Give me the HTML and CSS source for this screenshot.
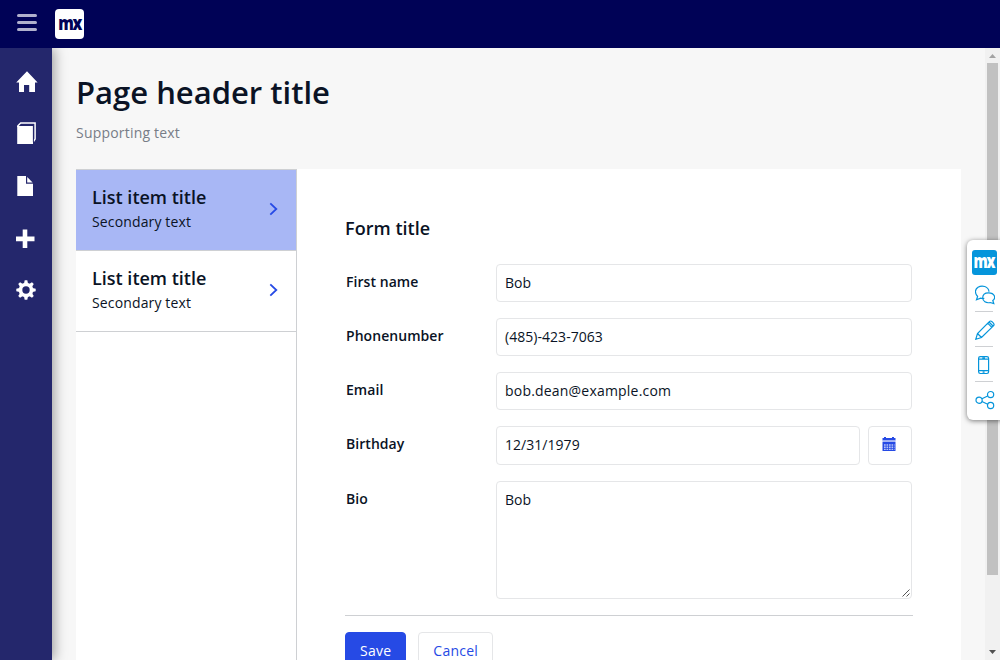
FILE: index.html
```html
<!DOCTYPE html>
<html lang="en">
<head>
<meta charset="utf-8">
<title>Page header title</title>
<link rel="stylesheet" href="styles.css">
</head>
<body>
<div class="app">
  <header class="topbar">
    <div class="menu-toggle"><span></span><span></span><span></span></div>
    <div class="logo"><span>mx</span></div>
  </header>
  <div class="body">
    <nav class="sidebar">
      <a class="nav-item"><svg viewBox="0 0 52 52"><path fill="#fff" d="M27 15.2 37.6 26.4H35V36H29.2V29H24V36H19V26.4H16.2Z"/></svg></a>
      <a class="nav-item"><svg viewBox="0 0 52 52"><path fill="#fff" d="M17.2 18H33V36H17.2Z"/><path fill="none" stroke="#fff" stroke-width="1.5" d="M17.9 19V17.8L20.7 14.9H35.1V31L33.4 33.5"/><path fill="none" stroke="#24276c" stroke-width="1" d="M20 17.3H33.4V34"/></svg></a>
      <a class="nav-item"><svg viewBox="0 0 52 52"><path fill="#fff" d="M17.3 16H26V23.8H33V36H17.3Z"/><path fill="#fff" d="M27.2 17 32.6 22.4H27.2Z"/></svg></a>
      <a class="nav-item"><svg viewBox="0 0 52 52"><path fill="#fff" d="M22.7 17.5H27.3V24.5H34.5V29.2H27.3V36H22.7V29.2H16V24.5H22.7Z"/></svg></a>
      <a class="nav-item"><svg viewBox="0 0 52 52"><g fill="#fff" transform="translate(26 26)"><circle r="7.3"/><path id="tooth" d="M-2-6.5-1.3-9.7H1.3L2-6.5V6.5L1.3 9.7H-1.3L-2 6.5Z"/><use href="#tooth" transform="rotate(45)"/><use href="#tooth" transform="rotate(90)"/><use href="#tooth" transform="rotate(135)"/><circle r="3.7" fill="#24276c"/></g></svg></a>
    </nav>
    <main class="page">
      <h1>Page header title</h1>
      <p class="support">Supporting text</p>
      <div class="panel">
        <div class="list">
          <div class="item selected">
            <div><h3>List item title</h3><p>Secondary text</p></div>
            <svg class="chevron" viewBox="0 0 10 14"><path d="M1.3 1.3 7.3 7 1.3 12.7"/></svg>
          </div>
          <div class="item">
            <div><h3>List item title</h3><p>Secondary text</p></div>
            <svg class="chevron" viewBox="0 0 10 14"><path d="M1.3 1.3 7.3 7 1.3 12.7"/></svg>
          </div>
        </div>
        <form class="form">
          <h2>Form title</h2>
          <div class="row"><label>First name</label><div class="input">Bob</div></div>
          <div class="row"><label>Phonenumber</label><div class="input">(485)-423-7063</div></div>
          <div class="row"><label>Email</label><div class="input email">bob.dean@example.com</div></div>
          <div class="row"><label>Birthday</label><div class="input date">12/31/1979</div>
            <div class="calendar"><svg viewBox="0 0 14 14"><path fill="#264ae5" d="M2 0H4V1H10V0H12V1H13.5V3.4H.5V1H2Z"/><path fill="#a8b7f5" d="M.5 3.4H13.5V5H.5Z"/><path fill="#264ae5" d="M.5 5H13.5V14H.5Z"/><path stroke="#b9c5f8" stroke-width="1.4" stroke-dasharray="1.7 .8" d="M2 8H12.5M2 10.2H12.5M2 12.4H12.5"/></svg></div>
          </div>
          <div class="row"><label>Bio</label><div class="input area">Bob<svg class="grip" viewBox="0 0 8 8"><path d="M.5 7.5 7.5.5M4.5 7.5 7.5 4.5"/></svg></div></div>
          <div class="actions"><a class="button primary">Save</a><a class="button">Cancel</a></div>
        </form>
      </div>
    </main>
    <div class="scrollbar">
      <svg viewBox="0 0 15 15"><path fill="#a3a3a3" d="M4 10H11L7.5 6Z"/></svg>
      <div class="thumb"></div>
      <svg class="down" viewBox="0 0 15 15"><path fill="#505050" d="M4 5H11L7.5 9Z"/></svg>
    </div>
  </div>
  <aside class="dock">
    <div class="dock-logo"><span>mx</span></div>
    <div class="tool"><svg viewBox="0 0 20 20"><path d="M9.3 13.3Q7.5 13.7 5.6 13.2L1.5 14.8 2.6 11.5C-.5 8-.2 4.5 3 2.3C7-.2 13.5 1.3 14 6.8"/><path d="M17.8 15.5 18.8 18.6 15.2 17.5C11 18.5 7.7 16.3 7.7 12.8C7.7 9.5 10.3 7.8 13.5 7.8C20 7.8 21 13.3 17.8 15.5Z"/></svg></div>
    <div class="tool"><svg viewBox="0 0 20 20"><path d="M.8 19.2 2.5 13.5 14.3 1.7Q15.5.3 17 1.7L18.4 3.1Q19.7 4.5 18.4 5.8L6.5 17.5ZM2.5 13.5 6.5 17.5M12.7 3.2 16.8 7.3M14 2 18 6"/></svg></div>
    <div class="tool"><svg viewBox="0 0 20 20"><rect x="3.6" y="1.6" width="10" height="16.9" rx="1.7"/><path d="M3.6 4.2H13.6M3.6 15.7H13.6M7.3 2.9H10M7.6 17.1H9.6"/></svg></div>
    <div class="tool"><svg viewBox="0 0 20 20"><circle cx="4.1" cy="10.2" r="3.1"/><circle cx="15.6" cy="4.6" r="3.1"/><circle cx="15.6" cy="15.5" r="3.1"/><path d="M6.9 8.8 12.7 6M6.9 11.5 12.7 14.2"/></svg></div>
  </aside>
</div>
</body>
</html>
```

FILE: styles.css
```css
* { box-sizing: border-box; }
body { margin: 0; color: #0a1325; font: 14px/20px "Open Sans", sans-serif; overflow: hidden; }
h1, h2, h3, p { margin: 0; font-weight: 600; }
svg { display: block; }
.app { height: 660px; display: flex; flex-direction: column; overflow: hidden; position: relative; }
.topbar { height: 48px; flex: none; background: #000256; display: flex; padding: 9px 17px; gap: 18px; }
.menu-toggle { width: 20px; display: flex; flex-direction: column; gap: 4px; padding-top: 5px; }
.menu-toggle span { height: 3px; border-radius: 2px; background: #b0b1cd; }
.logo { width: 29px; height: 30px; border-radius: 4px; background: #fff; color: #000256; display: flex; justify-content: center; }
.logo span { font: 800 20px/27px "Open Sans", sans-serif; letter-spacing: -1.6px; transform: scaleX(.78); }
.body { display: flex; flex: 1; min-height: 0; background: #f7f7f7; }
.sidebar { width: 52px; flex: none; background: #24276c; padding-top: 8px; box-shadow: 2px 0 12px rgba(0, 0, 0, .38); clip-path: inset(0 -20px 0 0); }
.nav-item { display: block; height: 52px; }
.nav-item svg { width: 52px; height: 52px; }
.page { flex: 1; padding: 23px 24px 0; overflow: hidden; }
h1 { font-size: 31px; line-height: 42px; }
.support { margin-top: 10px; font-weight: 400; color: #787d87; letter-spacing: .2px; }
.panel { margin-top: 26px; height: 620px; background: #fff; display: flex; }
.list { width: 221px; border-right: 1px solid #ced0d3; }
.item { height: 81px; border-bottom: 1px solid #ced0d3; padding: 15px 17px 0 16px; display: flex; justify-content: space-between; }
.item.selected { height: 82px; border-top: 1px solid #ced0d3; background: #a8b7f5; }
.item h3 { font-size: 18px; line-height: 25px; }
.item p { font-weight: 400; line-height: 24px; letter-spacing: .14px; }
.chevron { width: 10px; height: 14px; margin-top: 17px; fill: none; stroke: #264ae5; stroke-width: 1.8; }
.form { flex: 1; padding: 47px 48px 0; }
h2 { font-size: 18px; line-height: 24px; margin-bottom: 24px; letter-spacing: .04px; }
.row { display: flex; padding: 0 1px; margin-bottom: 16px; }
.row label { width: 150px; font-weight: 600; padding-top: 8px; letter-spacing: .05px; }
.input { flex: 1; height: 38px; border: 1px solid #e5e6e8; border-radius: 4px; padding: 8px; background: #fff; letter-spacing: .04px; }
.email { letter-spacing: .2px; }
.date { height: 39px; }
.calendar { width: 44px; height: 39px; margin-left: 8px; border: 1px solid #e5e6e8; border-radius: 4px; padding: 10px 0 0 13px; }
.calendar svg { width: 14px; height: 14px; }
.area { height: 118px; display: flex; justify-content: space-between; }
.grip { width: 8px; height: 8px; align-self: flex-end; margin: 0 -7px -7px 0; fill: none; stroke: #555; stroke-width: 1; }
.actions { border-top: 1px solid #ced0d3; padding-top: 16px; display: flex; gap: 12px; }
.button { height: 38px; border: 1px solid #e5e6e8; border-radius: 4px; padding: 8px 14px; color: #264ae5; letter-spacing: .25px; }
.primary { background: #264ae5; border-color: #264ae5; color: #fff; }
.scrollbar { width: 15px; flex: none; background: #f1f1f1; display: flex; flex-direction: column; }
.scrollbar svg { width: 15px; height: 15px; }
.thumb { height: 512px; margin: 0 2px; background: #c1c1c1; }
.down { margin-top: auto; }
.dock { position: absolute; left: 967px; top: 240px; width: 38px; height: 180px; border-radius: 6px; background: #fff; box-shadow: 0 1px 5px rgba(0, 0, 0, .5); padding: 10px 0 0 5px; }
.dock-logo { width: 25px; height: 25px; border-radius: 3px; background: #0595db; color: #fff; display: flex; justify-content: center; margin-bottom: 2px; }
.dock-logo span { font: 800 19px/22px "Open Sans", sans-serif; letter-spacing: -1.6px; margin-left: -1px; transform: scaleX(.75); }
.tool { width: 18px; height: 35px; margin-left: 3px; padding-top: 8px; border-bottom: 1px solid #ced0d3; }
.tool:last-child { border-bottom: 0; }
.tool svg { width: 20px; height: 20px; fill: none; stroke: #0595db; stroke-width: 1.2; }
```
